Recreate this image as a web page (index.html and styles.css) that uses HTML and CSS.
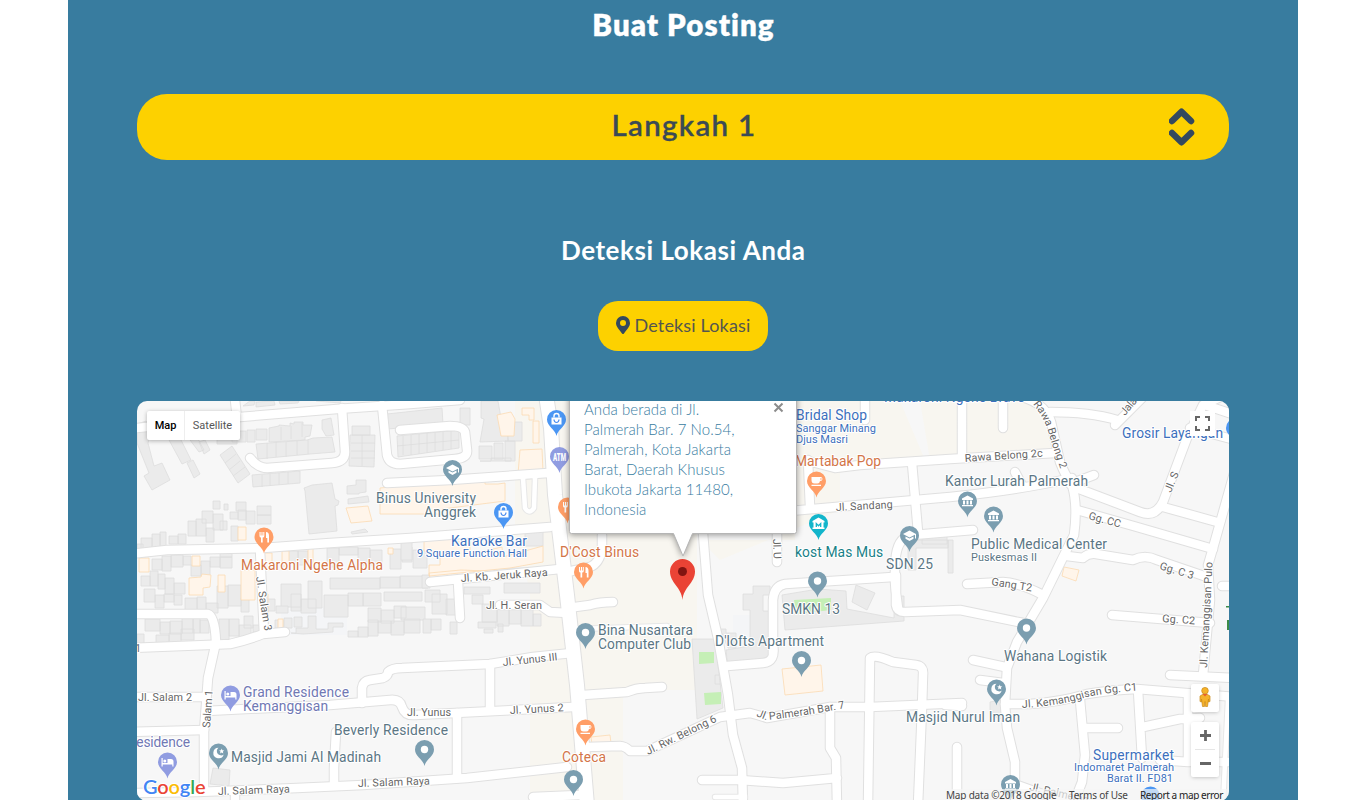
FILE: index.html
```html
<!DOCTYPE html>
<html lang="id">
<head>
<meta charset="utf-8">
<title>Buat Posting</title>
<link rel="stylesheet" href="styles.css">
</head>
<body>
<main class="panel">
  <h1 class="title"><span>Buat Posting</span></h1>
  <section class="step">
    <span class="step-name">Langkah 1</span>
    <svg class="step-icon" width="26" height="38" viewBox="0 0 26 38"><path d="M3 13 12.500 3.700 22 13M3 25 12.500 34.300 22 25"/></svg>
  </section>
  <h2 class="subtitle"><span>Deteksi Lokasi Anda</span></h2>
  <button class="detect" type="button">
    <svg width="14" height="18" viewBox="0 0 14 18"><path fill-rule="evenodd" d="M7 0a7 7 0 0 1 7 7c0 3.500-2.500 5.500-6 10.500q-1 1-2 0C2.500 12.500 0 10.500 0 7a7 7 0 0 1 7-7zm0 4a3 3 0 1 0 0 6 3 3 0 0 0 0-6z"/></svg>
    <span>Deteksi Lokasi</span>
  </button>
  <div class="map">
    <svg class="canvas" width="1092" height="400" viewBox="137 401 1092 400">
      <defs>
        <g id="pin"><path d="M0 16.500C-1 10-9.500 7-9.500 0a9.500 9.500 0 0 1 19 0C9.500 7 1 10 0 16.500z"/></g>
        <g id="fork" class="ink"><path d="M-4.500-5v4q0 1.500 1.500 1.500V5.500h1.700V.5Q.3.500.3-1v-4h-1v3.500h-.8V-5h-1v3.500h-.9V-5zM2-5q3 0 3 4V5.500H3.300V1H2z"/></g>
        <g id="cup" class="ink"><path d="M-5-4h9q2 0 2 2T3.500 0Q3 2.500 1 2.500h-3Q-5 2.500-5-1zM4-3v2q1.200 0 1.200-1T4-3zM-5 3.800H4.500v1.200H-5z"/></g>
        <g id="bag"><path class="ink" d="M-5-2H5v7H-5z"/><path class="line" d="M-2.500-2v-1.500a2.500 2.500 0 0 1 5 0V-2"/><path d="M-2.500 0a2.500 3 0 0 0 5 0" fill="none" stroke="#4a8df0" stroke-width="1.200"/></g>
        <g id="cap" class="ink"><path d="M0-5 6.500-1.500V3H5.500V-.8L0 2-6.500-1.500zM-4 1 0 3 4 1v2.300L0 5.500-4 3.300z"/></g>
        <g id="bank" class="ink"><path d="M0-5.500 5.500-2.500V-1h-11v-1.500zM-4.500-.5h2v4h-2zm3.500 0h2v4h-2zm3.500 0h2v4h-2zM-5.500 4h11v1.300h-11z"/></g>
        <g id="museum"><path class="ink" d="M0-6 6-2.500V-1H5v5h1v1.500H-6V4h1v-5h-1v-1.500z"/><path d="M-2.200 3.500V0L0 2.300 2.200 0v3.500" fill="none" stroke="#12b5cb" stroke-width="1.300"/></g>
        <g id="bed" class="ink"><path d="M-6-4h1.200v5H0v-4h3.500Q6-3 6-.5v5H4.800v-2h-9.600v2H-6zM-2.700-2.500a1.500 1.500 0 1 1 0 3 1.500 1.500 0 0 1 0-3z"/></g>
        <g id="moon" class="ink"><path d="M0-5.300A5.300 5.300 0 1 0 5.200 1.500 4.200 4.200 0 1 1 0-5.300zM3.200-4.500l.7 1.700 1.900.2-1.400 1.200.4 1.800-1.600-.9-1.600.9.400-1.800L.6-2.600l1.900-.2z"/></g>
        <circle id="dot" class="ink" r="3.700"/>

        <g id="roads-wide"><path d="M546 395 551 428 555 495 567 595 577 685 587 805"/></g>
        <g id="roads-mid">
          <path d="M137 428 240 417 337 409 410 404 460 400M235 400 237 418"/>
          <path d="M342 408 345 452Q345 462 332 463L267 468Q258 468 250 458"/>
          <path d="M382 405 387 455Q389 464 400 464L455 459Q468 458 467 450L465 432Q463 426 450 426L400 430"/>
          <path d="M387 483 450 480 548 473"/>
          <path d="M130 554 167 550 263 548 330 543 410 538 550 527"/>
          <path d="M130 648 207 645 230 644Q248 640 263 634L285 632M264 634 260 550"/>
          <path d="M130 614 208 614Q215 616 216 642L208 678 204 732V790"/>
          <path d="M137 697H206M206 711 330 705 390 700Q400 699 402 707 405 716 415 715L573 707"/>
          <path d="M362 703V688Q363 681 370 680L383 678Q388 676 388 672 392 668 402 668L490 664 533 657 572 653"/>
          <path d="M130 732 204 730M130 793 197 792 297 788 363 785 467 778 567 767"/>
          <path d="M334 783V768L336 732M235 791V805M490 664V707M457 713V778M458 582 460 618"/>
          <path d="M430 582 560 569M500 605 540 605 550 612 568 613M575 607 590 605Q600 602 613 602"/>
          <path d="M583 695 627 692Q636 688 645 688L662 687M533 797 580 795"/>
          <path d="M587 747 620 746Q625 746 630 751L647 751 720 717 750 713Q758 715 767 718L830 707 870 707 962 703"/>
          <path d="M567 572 590 567Q600 563 602 548V535"/>
          <path d="M695 480 703 533 708 595 718 638 728 695 733 735 742 768 743 805"/>
          <path d="M773 655V600Q774 586 785 584L893 577M773 645Q776 662 763 663L727 666"/>
          <path d="M898 608Q893 580 896 555 899 536 913 535L973 530M896 575V605Q897 612 905 612L960 610 1023 623"/>
          <path d="M790 511 950 497Q1020 490 1072 478M777 533V562M810 507 808 460M808 461 835 468 860 465 950 459 1055 453"/>
          <path d="M912 463 918 532M865 395V420M962 397V457M1003 395V428"/>
          <path d="M1022 397Q1046 404 1051 422L1060 462Q1065 475 1072 485 1078 505 1074 535L1043 598 1017 642 1007 668 1005 705 1007 728 1015 762 1015 800"/>
          <path d="M1050 412Q1090 412 1117 420M1115 425 1145 395M1015 472 1022 485M1094 475 1070 484"/>
          <path d="M1074 487 1140 512Q1155 518 1163 502L1187 438 1203 405 1229 393M1163 507 1217 522M1205 405 1235 415M1190 428 1235 440"/>
          <path d="M1235 470 1213 548 1208 565 1210 600 1203 675"/>
          <path d="M1077 510 1137 527 1213 549M1067 556 1083 558Q1088 553 1096 554L1133 560Q1145 554 1157 560L1207 577"/>
          <path d="M967 584 1003 582Q1020 583 1043 595M1222 586H1235M1112 615 1210 623M1170 675 1235 678"/>
          <path d="M1005 704H1030Q1060 702 1087 694 1110 690 1137 689L1235 697"/>
          <path d="M973 660 1005 667M980 680 1003 683M1080 700 1085 755 1082 782 1073 805M1085 728H1118"/>
          <path d="M1138 690 1142 758M1143 727 1180 719 1200 718M1188 695V762L1160 760M1187 762H1230M957 747V805M1017 785 1045 795 1080 800"/>
          <path d="M868 805 870 658Q875 654 893 662L916 665Q924 666 923 675L922 708 918 805"/>
          <path d="M830 707 830 748 836 758 837 805M702 780 740 780 783 783 837 778M945 705 962 706"/>
        </g>
        <g id="roads-thin"><path d="M523 478 525 508Q529 515 534 508L535 478M577 629 667 626M1228 700 1223 805M715 797 745 797"/></g>
        <path id="rb2" d="M1033 404Q1046 420 1050 438L1060 468 1064 482"/>
        <path id="kc1" d="M1022 708Q1060 706 1087 697 1110 692 1145 690"/>
        <path id="pb7" d="M756 716 766 720Q800 717 856 706"/>
      </defs>

      <rect x="137" y="401" width="1092" height="400" fill="#f7f7f7"/>
      <path fill="#f8f6f0" d="M515 401H697V690H663V690H623V801H530V590L515 540zM795 401H900L925 460 840 470V510L720 560 700 540H795zM920 401H1040L1052 448 930 460z"/>
      <path fill="#f4f5f7" d="M281 610 347 605V635H281zM733 615H757V655H733z"/>

      <g class="building">
        <path d="M137 424l9-3 5 10-3 12 6 23 8-3 8 17-18 10-8-14 5-3-12-30z"/>
        <path d="M169 440l11-2 11 22-9 4zM187 463l6-3 7 14-6 4zM190 440l8-1 6 11-5 2zM199 442l6-2 5 10-6 4z"/>
        <path d="M217 438h20v6h-20zM232 431h14v11h-14zM247 430h8v12h-8zM256 429h11v11h-11zM269 428l10-2v-1l11 1v-3l4 1v-2h9v3h9l-2 11-5 1v3l-36 2zM281 427v13M291 426v13M302 423v14M322 420l9-2 3 17-8 1-4-7z"/>
        <path d="M256 444 307 440 313 438 332 437 335 452 310 454 258 459zM267 443v16M276 442v15M286 442v15M297 441v14M308 440v14"/>
        <path d="M220 455l12-9 18 28-12 9zM225 463l11-9M229 470l11-9M233 476l12-9M252 475l48-4v12l-47 4zM262 475v12M270 474v12M279 473v12M288 472v12"/>
        <path d="M250 401h5l-1 4-11 1zM256 402l18-1 1 4-19 2zM279 401h20l-1 2-18 1zM316 401l24 2 1-2M387 401h20l-1 1h-18M352 426h18v9h-18zM350 435h25l-1 32-25-1zM351 443h24M351 451h24M351 458h24M362 435v31"/>
        <path d="M387 414 442 408 443 424 388 429zM460 408h10v17h-10zM397 436 459 430V448L398 457zM397 446 459 440M403 436v19M411 435v20M419 434v20M427 433v20M435 432v19M443 431v19M451 431v18"/>
        <path d="M481 401h17l3 17 5 1 2 22-28 1 4-23-3-1zM508 422h14v19h-14zM479 446h13v13h-13zM494 443h9v16h-9zM505 441h10v20h-10zM480 461h11v-3h20v3z"/>
        <path d="M304 488l8-3 20-2 3 16 4 2-1 4-3 1 2 25-28 3-4-43zM347 486l9-1v-5h10v12l-7 1v1h-12zM348 499l20-3 1 6-21 2zM351 532l14-3 3 3-16 2z"/>
        <path d="M257 506h14v9h-14zM257 515h14v9h-14zM236 502h10v9h-10zM224 504h4v6h-4zM213 501h7v8h-7zM202 511h11v12h-11zM213 514h10v16h-10zM188 521h8v15h-8zM196 519h10v17h-10zM206 528h8v14h-8zM220 521h7v9h-7zM230 512h8v7h-8zM238 510h8v10h-8zM246 511h9v13h-9zM231 526h7v15h-7zM169 536h9v8h-9zM178 534h8v10h-8zM152 534h8v15h-8zM160 532h6v18h-6zM141 538h11v12h-11zM137 544h6v5h-6z"/>
        <path d="M152 559h10v11h-10zM162 556h9v15h-9zM171 555h12v12h-12zM183 556h8v9h-8zM191 565h10v11h-10zM201 561h9v15h-9zM210 557h10v10h-10zM220 551h12v6h-12zM220 557h12v11h-12zM141 576h9v10h-9zM150 571h8v15h-8zM158 574h7v15h-7zM165 578h9v16h-9zM174 583h11v11h-11zM144 589h11v13h-11zM155 595h9v13h-9zM164 594h10v8h-10zM174 595h8v10h-8zM185 598h12v14h-12zM197 597h9v14h-9zM206 603h12v10h-12zM217 586h11v22h-11zM228 585h13v21h-13zM241 598h8v14h-8z"/>
        <path d="M145 619h15v12h-15zM160 622h10v12h-10zM170 621h12v13h-12zM182 616h11v17h-11zM193 618h7v15h-7zM200 620h9v13h-9zM156 635h13v11h-13zM169 633h12v10h-12zM181 629h13v11h-13zM219 619h10v24h-10zM229 619h10v17h-10zM239 625h12v14h-12zM244 616h9v12h-9zM253 625h7v7h-7zM137 634h7v11h-7z"/>
        <path d="M286 551h12v12h-12zM298 551h10v14h-10zM327 548h12v19h-12zM339 547h19v8h-19zM358 548h12v17h-12zM370 550h12v15h-12zM390 549h11v20h-11zM402 547h10v15h-10zM330 578h50v11h-50zM380 577h20v11h-20zM400 576h28v12h-28zM281 584h20v23h-20zM308 581h14v27h-14zM291 594h10v17h-10zM301 599h15v14h-15zM324 595h24v22h-24zM348 593h15v13h-15zM363 593h18v13h-18zM384 592h38v9h-38zM401 607h24v13h-24zM368 608h13v14h-13zM381 610h13v13h-13zM394 606h12v12h-12zM348 631h10v6h-10zM358 627h10v10h-10zM368 620h10v16h-10zM378 621h13v12h-13zM391 621h13v14h-13zM404 619h16v14h-16z"/>
        <path d="M291 633h5v-5h12v-12h8v13h12v-6h15v4h-10v5l-30 2zM275 620h8v8h-8zM284 618h8v10h-8zM294 617h8v10h-8zM267 599h8v12h-8zM276 606h12v7h-12zM422 575h8v13h-8zM425 590h15v12h-15zM432 594h15v20h-15zM446 599h11v16h-11zM423 619h8v14h-8zM431 619h10v11h-10zM450 622h7v12h-7zM472 595h11v9h-11zM482 604h15v18h-15zM497 606h12v20h-12zM509 606h12v18h-12zM521 608h12v18h-12zM533 614h8v12h-8zM478 622h18v6h-18zM484 629h9v4h-9zM498 624h5v8h-5zM464 587h26v7h-26zM504 583h36v10h-36zM525 531h18v15h-18zM494 568h33v7h-33zM401 542h11v18h-11zM413 550h14v18h-14z"/>
        <path d="M743 594h10v-8h17v9h-7v16h11v52l-46 7-2-20 24-4v-36h-7zM720 629h6v4h10v15h-8zM692 639h23l8 69-26 11zM715 675h7v9h-7zM782 595l36-6 28 2 1 18 47 9v-22h10v25l-119 9zM856 585l19 8-8 17-15-8zM908 540h40v8h-32v22h-8zM948 540h5v33h-5zM922 536h25v8h-25z"/>
        <path d="M213 768l17 2-1 16-19-2zM990 702l11-2 3 20-14-5z"/>
      </g>
      <g class="shop">
        <path d="M346 508l22-2 4 15-21 2zM380 488l20-2 25-1 45-3v-5h15v7h13l7-1v18l-63 8v5h-62zM497 415l14-3 4 7-1 17h-13zM522 408h12v12h-5v-5h-7zM533 421h6v22h-6zM520 450l22-1 1 23-25 2z"/>
        <path d="M424 539l28-1v4h18v12l32-7 1 10 40-11v16l-33 6-81 8v-11h11v-14h-16zM429 573l32-3 50 2v7l-80 4zM238 527h8v13h-8zM139 558h10v14h-10zM192 556h8v10h-8zM189 578l12-1 1-3 9 1-1 12-7 1v7h-14zM218 575h7v17h-7zM241 570h14v30h-14zM282 551h7v15h-7zM308 548h5v15h-5zM388 548h5v6h-5zM263 553h9v17h-9zM264 594h4v35h-4zM278 619h5v10h-5z"/>
        <path d="M782 669l39-4 2 26-38 4zM1064 567l15 3-3 11-14-5zM591 737l19-2 1 8-19 1z"/>
      </g>
      <path fill="#c5efb6" d="M794 600l37-2v12l-35 4zM699 652h15v11l-15 1zM704 693l17-1v12l-16 1z"/>

      <g class="roads">
        <use href="#roads-wide" stroke="#e0e0e0" stroke-width="16"/>
        <use href="#roads-mid" stroke="#e0e0e0" stroke-width="10.500"/>
        <use href="#roads-thin" stroke="#e7e7e7" stroke-width="6.500"/>
        <use href="#roads-thin" stroke="#fff" stroke-width="4.500"/>
        <use href="#roads-mid" stroke="#fff" stroke-width="8.500"/>
        <use href="#roads-wide" stroke="#fff" stroke-width="14"/>
      </g>

      <g class="street">
        <text x="138" y="701" textLength="54">Jl. Salam 2</text>
        <text x="135" y="652">1</text>
        <text transform="translate(210 728) rotate(-86)" textLength="38">Salam 1</text>
        <text transform="translate(256 577) rotate(81)" textLength="55">Jl. Salam 3</text>
        <text transform="translate(461 582) rotate(-4)" textLength="87">Jl. Kb. Jeruk Raya</text>
        <text x="486" y="609" textLength="56">Jl. H. Seran</text>
        <text transform="translate(503 666) rotate(-6)" textLength="55">Jl. Yunus III</text>
        <text x="407" y="716" textLength="44">Jl. Yunus</text>
        <text transform="translate(510 714) rotate(-3)" textLength="54">Jl. Yunus 2</text>
        <text transform="translate(218 795) rotate(-2)" textLength="72">Jl. Salam Raya</text>
        <text transform="translate(358 787) rotate(-2)" textLength="72">Jl. Salam Raya</text>
        <text transform="translate(648 755) rotate(-26)" textLength="77">Jl. Rw. Belong 6</text>
        <text><textPath href="#pb7" textLength="91">Jl. Palmerah Bar. 7</textPath></text>
        <text transform="translate(836 511) rotate(-3)" textLength="57">Jl. Sandang</text>
        <text transform="translate(965 462) rotate(-4)" textLength="78">Rawa Belong 2c</text>
        <text><textPath href="#rb2" textLength="71">Rawa Belong 2</textPath></text>
        <text transform="translate(773 539) rotate(88)" textLength="20">Jl. U</text>
        <text transform="translate(1171 493) rotate(-68)" textLength="21">Jl. S</text>
        <text transform="translate(1125 416) rotate(-50)" textLength="25">Jalan</text>
        <text transform="translate(1088 519) rotate(15)" textLength="33">Gg. CC</text>
        <text transform="translate(1159 569) rotate(17)" textLength="35">Gg. C 3</text>
        <text transform="translate(991 585) rotate(9)" textLength="41">Gang T2</text>
        <text transform="translate(1162 622) rotate(4)" textLength="33">Gg. C2</text>
        <text transform="translate(1207 668) rotate(-87)" textLength="106">Jl. Kemanggisan Pulo</text>
        <text><textPath href="#kc1" textLength="117">Jl. Kemanggisan Gg. C1</textPath></text>
        <text transform="translate(1029 790) rotate(13)" textLength="60">Jl. Palmerah</text>
      </g>

      <g class="pins">
        <g transform="translate(264 537)" fill="#ff9e67"><use href="#pin"/><use href="#fork"/></g>
        <g transform="translate(452.500 469.500)" fill="#7b9eb0"><use href="#pin"/><use href="#cap"/></g>
        <g transform="translate(556.500 419.500)" fill="#4b96f3"><use href="#pin"/><use href="#bag"/></g>
        <g transform="translate(559.500 456.500)" fill="#909ce1"><use href="#pin"/><text class="atm" x="-6.500" y="4.500" textLength="13" lengthAdjust="spacingAndGlyphs">ATM</text></g>
        <g transform="translate(567.500 507)" fill="#ff9e67"><use href="#pin"/><use href="#fork"/></g>
        <g transform="translate(503.500 512.500)" fill="#4b96f3"><use href="#pin"/><use href="#bag"/></g>
        <g transform="translate(583.500 572)" fill="#ff9e67"><use href="#pin"/><use href="#fork"/></g>
        <g transform="translate(816.500 481)" fill="#ff9e67"><use href="#pin"/><use href="#cup"/></g>
        <g transform="translate(818.500 523.500)" fill="#12b5cb"><use href="#pin"/><use href="#museum"/></g>
        <g transform="translate(909.500 535.500)" fill="#7b9eb0"><use href="#pin"/><use href="#cap"/></g>
        <g transform="translate(817.500 581)" fill="#7b9eb0"><use href="#pin"/><use href="#dot"/></g>
        <g transform="translate(967.500 501)" fill="#7b9eb0"><use href="#pin"/><use href="#bank"/></g>
        <g transform="translate(993.500 516)" fill="#7b9eb0"><use href="#pin"/><use href="#bank"/></g>
        <g transform="translate(1235.500 428)" fill="#4b96f3"><use href="#pin"/></g>
        <g transform="translate(230.500 695)" fill="#909ce1"><use href="#pin"/><use href="#bed"/></g>
        <g transform="translate(167.500 762)" fill="#909ce1"><use href="#pin"/><use href="#bed"/></g>
        <g transform="translate(218.500 753)" fill="#7b9eb0"><use href="#pin"/><use href="#moon"/></g>
        <g transform="translate(424.500 749.500)" fill="#7b9eb0"><use href="#pin"/><use href="#dot"/></g>
        <g transform="translate(585.500 632.500)" fill="#7b9eb0"><use href="#pin"/><use href="#dot"/></g>
        <g transform="translate(585.500 729)" fill="#ff9e67"><use href="#pin"/><use href="#cup"/></g>
        <g transform="translate(573.500 779.500)" fill="#7b9eb0"><use href="#pin"/><use href="#dot"/></g>
        <g transform="translate(801.500 660.500)" fill="#7b9eb0"><use href="#pin"/><use href="#dot"/></g>
        <g transform="translate(1026.500 628)" fill="#7b9eb0"><use href="#pin"/><use href="#dot"/></g>
        <g transform="translate(996.500 689)" fill="#7b9eb0"><use href="#pin"/><use href="#moon"/></g>
        <g transform="translate(1010.500 784.500)" fill="#7b9eb0"><use href="#pin"/><use href="#bank"/></g>
        <g transform="translate(1150.500 796)" fill="#4b96f3"><use href="#pin"/></g>
      </g>

      <g class="place slate">
        <text x="376" y="503" textLength="100">Binus University</text><text x="424" y="517" textLength="52">Anggrek</text>
        <text x="886" y="569" textLength="47">SDN 25</text><text x="945" y="486" textLength="143">Kantor Lurah Palmerah</text>
        <text x="971" y="549" textLength="136">Public Medical Center</text><text class="small" x="971" y="561" textLength="66">Puskesmas II</text>
        <text x="782" y="614" textLength="58">SMKN 13</text><text x="715" y="646" textLength="109">D'lofts Apartment</text>
        <text x="598" y="635" textLength="95">Bina Nusantara</text><text x="598" y="649" textLength="93">Computer Club</text>
        <text x="334" y="735" textLength="114">Beverly Residence</text><text x="231" y="762" textLength="150">Masjid Jami Al Madinah</text>
        <text x="1004" y="661" textLength="103">Wahana Logistik</text><text x="906" y="722" textLength="114">Masjid Nurul Iman</text>
      </g>
      <g class="place blue">
        <text x="451" y="546" textLength="76">Karaoke Bar</text><text class="small" x="417" y="557" textLength="110">9 Square Function Hall</text>
        <text x="796" y="420" textLength="71">Bridal Shop</text><text class="small" x="796" y="432" textLength="80">Sanggar Minang</text><text class="small" x="796" y="443" textLength="52">Djus Masri</text>
        <text x="884" y="402" textLength="141">Makaroni Ngehe Bravo</text><text x="1122" y="438" textLength="101">Grosir Layangan</text>
        <text x="1093" y="760" textLength="81">Supermarket</text><text class="small" x="1074" y="771" textLength="100">Indomaret Palmerah</text><text class="small" x="1107" y="782" textLength="66">Barat II. FD81</text>
      </g>
      <g class="place orange">
        <text x="241" y="570" textLength="142">Makaroni Ngehe Alpha</text><text x="560" y="557" textLength="79">D'Cost Binus</text>
        <text x="795" y="466" textLength="86">Martabak Pop</text><text x="562" y="762" textLength="44">Coteca</text>
      </g>
      <g class="place teal"><text x="795" y="557" textLength="88">kost Mas Mus</text></g>
      <g class="place violet">
        <text x="243" y="697" textLength="106">Grand Residence</text><text x="243" y="711" textLength="85">Kemanggisan</text><text x="128" y="747" textLength="62">Residence</text>
      </g>
      <path fill="#3c8c48" d="M1226 606h3v1.500h-3zM1227 620h3v10h-3z"/>

      <path fill="#ea4335" d="M682.500 600C681.500 587 670 583 670 571.500a12.500 12.500 0 0 1 25 0C695 583 683.500 587 682.500 600z"/>
      <circle cx="682.500" cy="571.500" r="4.500" fill="#811411"/>
      <path class="bubble" d="M569.500 390V531.500q0 2 2 2H673.500L683 556 692.500 533.500H794.500q2 0 2-2V390z"/>
      <path d="M774.500 403.500l8 8m0-8-8 8" stroke="#8c8c8c" stroke-width="2"/>
      <g class="logo"><text x="143" y="793.500" textLength="62.500"><tspan fill="#4285f4">G</tspan><tspan fill="#ea4335">o</tspan><tspan fill="#fbbc05">o</tspan><tspan fill="#4285f4">g</tspan><tspan fill="#34a853">l</tspan><tspan fill="#ea4335">e</tspan></text></g>
    </svg>

    <div class="info">
      <div>Anda berada di Jl.</div><div>Palmerah Bar. 7 No.54,</div><div>Palmerah, Kota Jakarta</div><div>Barat, Daerah Khusus</div><div>Ibukota Jakarta 11480,</div><div>Indonesia</div>
    </div>
    <div class="types"><span class="active">Map</span><span>Satellite</span></div>
    <div class="full"><svg width="15" height="15" viewBox="0 0 15 15"><path d="M1 5V1h4M10 1h4v4M14 10v4h-4M5 14H1v-4"/></svg></div>
    <div class="side">
      <div class="person"><svg width="12" height="20" viewBox="0 0 12 20"><path fill="#f5b229" stroke="#c98a1b" stroke-width=".7" d="M3.500 7.500 1 9v5.500l1.500.5V12l1 7.500h2l.5-5 .5 5h2l1-7.500v3l1.500-.5V9L8.500 7.500z"/><circle cx="6" cy="3.700" r="3.300" fill="#f5b229" stroke="#c98a1b" stroke-width=".7"/><path fill="#e8602c" d="M3.500 7h5L6 9.500z"/></svg></div>
      <div class="zoom"><svg width="28" height="55" viewBox="0 0 28 55"><path d="M9 13.500h11M14.500 8v11M9 41.500h11" stroke="#666" stroke-width="2.800"/><path d="M4 27.500h20" stroke="#e6e6e6"/></svg></div>
    </div>
    <div class="legal"><span class="data">Map data ©2018 Google</span><span class="terms">Terms of Use</span><span class="report">Report a map error</span></div>
  </div>
</main>
</body>
</html>
```
FILE: styles.css
```css
* { box-sizing: border-box; }
html, body { height: 800px; overflow: hidden; }
body { margin: 0; background: #fff; font-family: Lato, "Open Sans", sans-serif; }
.panel { display: flex; flex-direction: column; align-items: center; width: 1230px; height: 801px; margin: 0 auto; background: #387c9f; }
.title { margin: 7px 0 51px; height: 36px; font-size: 29.500px; line-height: 36px; font-weight: 800; letter-spacing: 1.050px; color: #fff; white-space: nowrap; -webkit-text-stroke: .3px #fff; }
.title span { display: inline-block; margin-right: -1px; }
.step { display: flex; flex: none; align-items: center; justify-content: center; position: relative; width: 1092px; height: 66px; border-radius: 30px; background: #fdd100; color: #34495e; }
.step-name { font-size: 29.500px; line-height: 64px; font-weight: 600; letter-spacing: 1.300px; margin-right: -2px; padding-bottom: 4px; color: #3b4a55; -webkit-text-stroke: .3px #3b4a55; }
.step-icon { position: absolute; right: 34px; top: 14px; fill: none; stroke: #34495e; stroke-width: 6.500; stroke-linecap: round; stroke-linejoin: round; }
.subtitle { margin: 74px 0 35px; height: 32px; font-size: 26px; line-height: 32px; font-weight: 700; letter-spacing: .55px; color: #fff; white-space: nowrap; }
.subtitle span { display: inline-block; margin-right: -.55px; }
.detect { display: flex; flex: none; align-items: center; justify-content: center; gap: 5px; width: 170px; height: 50px; padding: 0 0 2px; border: 0; border-radius: 20px; background: #fdd100; font: 400 18px Lato, sans-serif; letter-spacing: .15px; color: #55564f; white-space: nowrap; }
.detect svg { fill: #34495e; }
.map { position: relative; flex: none; width: 1092px; height: 400px; margin-top: 50px; border-radius: 10px; overflow: hidden; font-family: Roboto, sans-serif; }
.canvas { display: block; }
.building path { fill: #ebebeb; stroke: #dddddd; stroke-width: .8; }
.shop path { fill: #fff5ea; stroke: #fbdab2; stroke-width: .8; }
.roads { fill: none; stroke-linecap: round; stroke-linejoin: round; }
.street { font-size: 10.800px; font-weight: 400; fill: #666; stroke: #fff; stroke-width: 2px; paint-order: stroke; }
.place { font-size: 13.800px; stroke: #fff; stroke-width: 2px; stroke-linejoin: round; paint-order: stroke; }
.small { font-size: 11px; }
.slate { fill: #5b7684; }
.blue { fill: #3c70bd; }
.orange { fill: #d37548; }
.teal { fill: #187f87; }
.violet { fill: #7078b4; }
.ink { fill: #fff; }
.line { fill: none; stroke: #fff; stroke-width: 1.400; }
.atm { font-size: 11px; font-weight: 900; fill: #fff; }
.bubble { fill: #fff; stroke: #b5b5b5; stroke-width: 1; filter: drop-shadow(0 1px 3px rgba(0, 0, 0, .4)); }
.logo { font: 600 20px Lato, sans-serif; stroke: #fff; stroke-width: 2px; paint-order: stroke; }
.info { position: absolute; left: 447px; top: -2px; font: 300 15px/20px Lato, sans-serif; letter-spacing: .08px; color: #387c9f; white-space: nowrap; }
.types { position: absolute; left: 10px; top: 10px; display: flex; height: 29px; background: #fff; border-radius: 2px; box-shadow: 0 1px 4px rgba(0, 0, 0, .3); font-size: 11px; line-height: 29px; color: #565656; }
.types span { width: 55px; text-align: center; }
.types .active { width: 38px; font-weight: 500; color: #000; border-right: 1px solid #eee; }
.full { position: absolute; right: 14px; top: 10px; width: 25px; height: 25px; padding: 5px; background: #fff; }
.full svg { display: block; fill: none; stroke: #666; stroke-width: 2; }
.side { position: absolute; right: 10px; top: 283px; display: flex; flex-direction: column; gap: 10px; }
.person, .zoom { width: 28px; background: #fff; border-radius: 2px; box-shadow: 0 1px 4px -1px rgba(0, 0, 0, .3); }
.person { display: flex; justify-content: center; align-items: center; height: 28px; padding-bottom: 2px; }
.zoom { height: 55px; }
.legal { position: absolute; right: 0; bottom: 0; display: flex; gap: 12px; width: 284px; height: 12px; padding: 0 6px 0 1px; font: 10px/13px "Noto Sans", sans-serif; letter-spacing: -.2px; color: #444; background: rgba(245, 245, 245, .7); white-space: nowrap; }
.data { width: 111px; }
.terms { width: 59px; }
.report { width: 83px; letter-spacing: -.4px; color: #222; }
```
